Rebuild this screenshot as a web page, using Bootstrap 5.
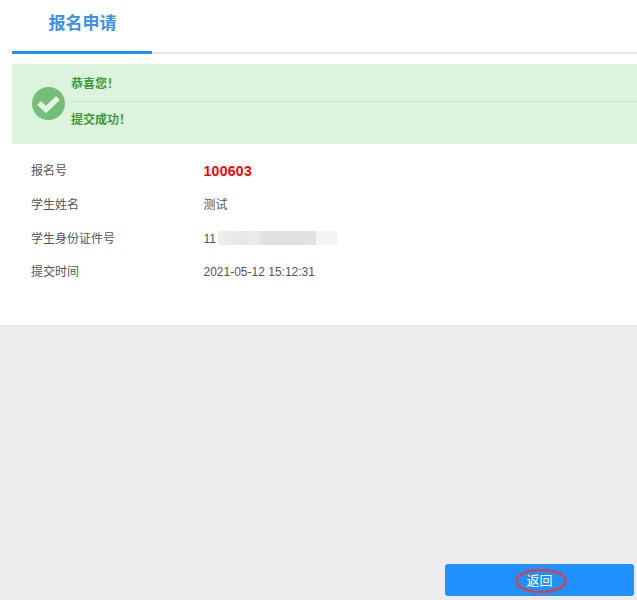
<!DOCTYPE html>
<html lang="zh-CN">
<head>
<meta charset="utf-8">
<title>报名申请</title>
<link href="https://cdn.jsdelivr.net/npm/bootstrap@5.3.0/dist/css/bootstrap.min.css" rel="stylesheet">
<style>
html,body{height:600px;overflow:hidden}
body{background:#ececec;font-family:"Liberation Sans","Noto Sans CJK SC",sans-serif;color:#555;font-size:12px}
.top-panel{height:326px;background:#fff;border-bottom:1px solid #e6e6e6;padding-left:12px}
.tab-strip{height:54px;border-bottom:2px solid #e8e8e8}
.tab-item{width:140px;height:54px;border-bottom:3px solid #1e90ff;color:#3b8ff0;font-size:17px;font-weight:700;padding:12px 0 0 36.5px;line-height:23px}
.ok-box{margin-top:10px;height:80px;background:#dcf3dd;border-radius:2px 0 0 2px;padding-left:20px;color:#3f9a3a;font-weight:700}
.ok-icon{width:33px;height:33px;flex:none;margin-top:23px}
.ok-lines{margin-left:6px}
.ok-line{height:37px;line-height:41px}
.ok-line2{height:43px;line-height:36px;border-top:1px solid #cde6cf}
.info-row{height:33.6px;line-height:34px}
.info-list{margin-top:10.4px;padding-left:19px}
.info-key{width:172.5px;flex:none}
.info-num{color:#f00;font-weight:700;font-size:14px;letter-spacing:.3px}
.blur-id{width:119px;height:14px;margin-left:2px;background:linear-gradient(90deg,#f0f0f0 0,#e6e6e6 20%,#ececec 30%,#e0e0e0 40%,#e2e2e2 82%,#f4f4f4 83%,#f4f4f4 100%)}
.foot-bar{height:274px;padding:238px 3px 0 0}
.back-btn{width:189px;height:32px;background:#1e90ff;color:#fff;border:0;border-radius:3px;font-size:13px;padding:1px 0 0 0}
.back-ring{position:absolute;left:70px;top:5px}
</style>
</head>
<body>
<div class="top-panel">
  <div class="tab-strip"><div class="tab-item">报名申请</div></div>
  <div class="ok-box d-flex">
    <svg class="ok-icon" viewBox="0 0 33 33"><circle cx="16.5" cy="16.5" r="16.5" fill="#74bf78"/><path d="M7 16l7 6.5 12-11.5" fill="none" stroke="#e4f5e5" stroke-width="5.5"/></svg>
    <div class="ok-lines flex-grow-1">
      <div class="ok-line">恭喜您！</div>
      <div class="ok-line2">提交成功！</div>
    </div>
  </div>
  <div class="info-list">
    <div class="info-row d-flex"><div class="info-key">报名号</div><div class="info-num">100603</div></div>
    <div class="info-row d-flex"><div class="info-key">学生姓名</div><div>测试</div></div>
    <div class="info-row d-flex"><div class="info-key">学生身份证件号</div><div>11</div><div class="blur-id align-self-center"></div></div>
    <div class="info-row d-flex"><div class="info-key">提交时间</div><div>2021-05-12 15:12:31</div></div>
  </div>
</div>
<div class="foot-bar d-flex justify-content-end">
  <button type="button" class="btn back-btn position-relative">返回<svg class="back-ring" width="52" height="24" viewBox="0 0 52 24"><ellipse cx="26" cy="12" rx="24.5" ry="11" fill="none" stroke="#d8404f" stroke-width="2.5"/></svg></button>
</div>
</body>
</html>
